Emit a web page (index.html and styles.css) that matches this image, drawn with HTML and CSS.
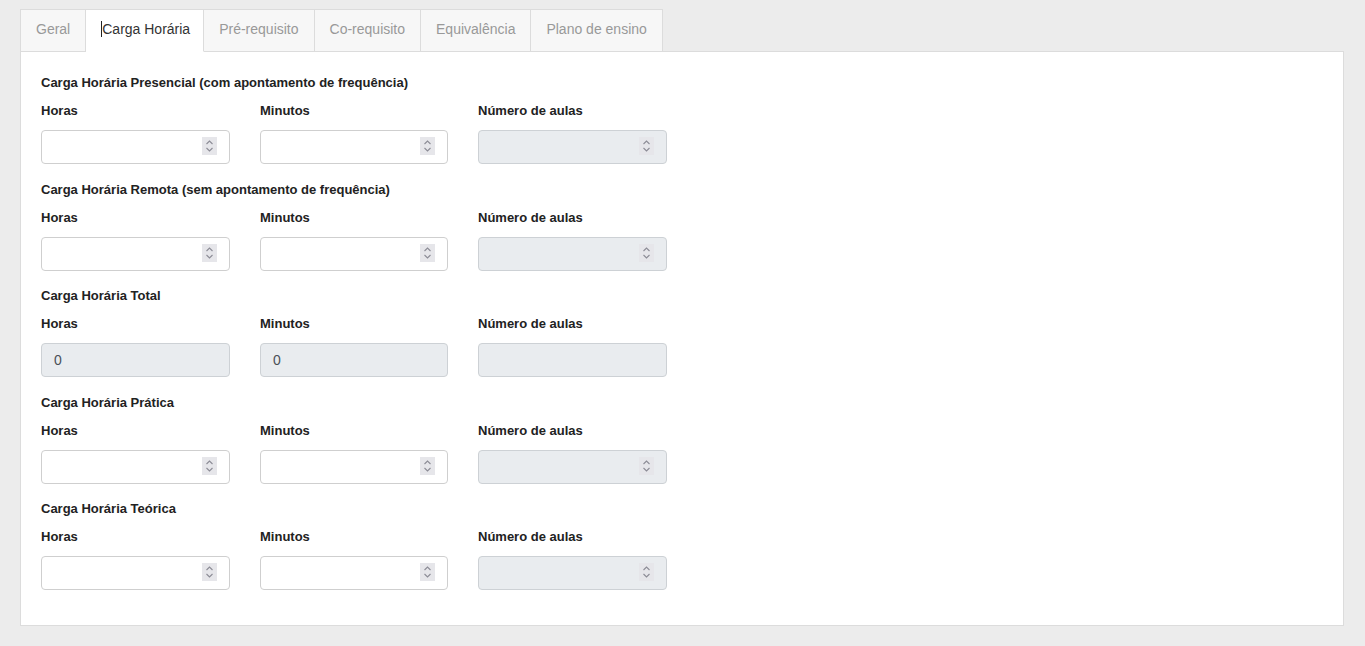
FILE: index.html
```html
<!DOCTYPE html>
<html lang="pt">
<head>
<meta charset="utf-8">
<title>Carga Horária</title>
<link rel="stylesheet" href="styles.css">
</head>
<body>
<div class="page">
  <ul class="tabs">
    <li class="tab">Geral</li>
    <li class="tab active"><span class="caret"></span>Carga Horária</li>
    <li class="tab">Pré-requisito</li>
    <li class="tab">Co-requisito</li>
    <li class="tab">Equivalência</li>
    <li class="tab">Plano de ensino</li>
  </ul>
  <div class="panel">
    <section class="group">
      <h3 class="group-title">Carga Horária Presencial (com apontamento de frequência)</h3>
      <div class="row">
        <div class="field"><label>Horas</label><div class="input"><span class="spin"><svg viewBox="0 0 14 18"><path d="M4 7l3-3 3 3M4 11l3 3 3-3"/></svg></span></div></div>
        <div class="field"><label>Minutos</label><div class="input"><span class="spin"><svg viewBox="0 0 14 18"><path d="M4 7l3-3 3 3M4 11l3 3 3-3"/></svg></span></div></div>
        <div class="field"><label>Número de aulas</label><div class="input disabled"><span class="spin"><svg viewBox="0 0 14 18"><path d="M4 7l3-3 3 3M4 11l3 3 3-3"/></svg></span></div></div>
      </div>
    </section>
    <section class="group">
      <h3 class="group-title">Carga Horária Remota (sem apontamento de frequência)</h3>
      <div class="row">
        <div class="field"><label>Horas</label><div class="input"><span class="spin"><svg viewBox="0 0 14 18"><path d="M4 7l3-3 3 3M4 11l3 3 3-3"/></svg></span></div></div>
        <div class="field"><label>Minutos</label><div class="input"><span class="spin"><svg viewBox="0 0 14 18"><path d="M4 7l3-3 3 3M4 11l3 3 3-3"/></svg></span></div></div>
        <div class="field"><label>Número de aulas</label><div class="input disabled"><span class="spin"><svg viewBox="0 0 14 18"><path d="M4 7l3-3 3 3M4 11l3 3 3-3"/></svg></span></div></div>
      </div>
    </section>
    <section class="group">
      <h3 class="group-title">Carga Horária Total</h3>
      <div class="row">
        <div class="field"><label>Horas</label><div class="input disabled">0</div></div>
        <div class="field"><label>Minutos</label><div class="input disabled">0</div></div>
        <div class="field"><label>Número de aulas</label><div class="input disabled"></div></div>
      </div>
    </section>
    <section class="group">
      <h3 class="group-title">Carga Horária Prática</h3>
      <div class="row">
        <div class="field"><label>Horas</label><div class="input"><span class="spin"><svg viewBox="0 0 14 18"><path d="M4 7l3-3 3 3M4 11l3 3 3-3"/></svg></span></div></div>
        <div class="field"><label>Minutos</label><div class="input"><span class="spin"><svg viewBox="0 0 14 18"><path d="M4 7l3-3 3 3M4 11l3 3 3-3"/></svg></span></div></div>
        <div class="field"><label>Número de aulas</label><div class="input disabled"><span class="spin"><svg viewBox="0 0 14 18"><path d="M4 7l3-3 3 3M4 11l3 3 3-3"/></svg></span></div></div>
      </div>
    </section>
    <section class="group">
      <h3 class="group-title">Carga Horária Teórica</h3>
      <div class="row">
        <div class="field"><label>Horas</label><div class="input"><span class="spin"><svg viewBox="0 0 14 18"><path d="M4 7l3-3 3 3M4 11l3 3 3-3"/></svg></span></div></div>
        <div class="field"><label>Minutos</label><div class="input"><span class="spin"><svg viewBox="0 0 14 18"><path d="M4 7l3-3 3 3M4 11l3 3 3-3"/></svg></span></div></div>
        <div class="field"><label>Número de aulas</label><div class="input disabled"><span class="spin"><svg viewBox="0 0 14 18"><path d="M4 7l3-3 3 3M4 11l3 3 3-3"/></svg></span></div></div>
      </div>
    </section>
  </div>
</div>
</body>
</html>
```

FILE: styles.css
```css
html, body {
  margin: 0;
  padding: 0;
  background: #ececec;
  font-family: "Liberation Sans", Arial, Helvetica, sans-serif;
  color: #333;
}

.page {
  padding: 9px 21px 20px 20px;
}

.tabs {
  display: flex;
  list-style: none;
  margin: 0;
  padding: 0;
  position: relative;
  z-index: 1;
}

.tab {
  box-sizing: border-box;
  height: 43px;
  padding: 0 15px;
  line-height: 38px;
  font-size: 14px;
  color: #999;
  background: #f7f7f7;
  border: 1px solid #dcdcdc;
  border-left: none;
  border-bottom: 1px solid #dcdcdc;
}

.tab:first-child {
  border-left: 1px solid #dcdcdc;
}

.tab.active {
  background: #fff;
  color: #333;
  border-bottom-color: #fff;
  padding-left: 15px;
  padding-right: 13px;
}

.caret {
  display: inline-block;
  width: 1px;
  height: 16px;
  margin-right: 0;
  background: #222;
  vertical-align: -3px;
}

.panel {
  background: #fff;
  border: 1px solid #dcdcdc;
  margin-top: -1px;
  padding: 21px 20px 35px 20px;
}

.group + .group {
  margin-top: 15.5px;
}

.group-title {
  margin: 0;
  font-size: 13px;
  font-weight: bold;
  line-height: 20px;
  color: #222;
}

.row {
  display: grid;
  grid-template-columns: 189px 188px 189px;
  column-gap: 30px;
  margin-top: 8px;
}

.field label {
  display: block;
  font-size: 13px;
  font-weight: bold;
  line-height: 20px;
  color: #222;
  margin-bottom: 9px;
}

.input {
  position: relative;
  box-sizing: border-box;
  height: 34px;
  border: 1px solid #cfcfcf;
  border-radius: 4px;
  background: #fff;
  padding: 0 12px;
  font-size: 14px;
  line-height: 32px;
  color: #495057;
}

.input.disabled {
  background: #e9ecef;
  border-color: #cdd1d5;
}

.spin {
  position: absolute;
  right: 12px;
  top: 6px;
  width: 15px;
  height: 18px;
  background: #e6e6ea;
}

.spin svg {
  display: block;
  width: 15px;
  height: 18px;
  fill: none;
  stroke: #8c8c96;
  stroke-width: 1.1;
}
```
